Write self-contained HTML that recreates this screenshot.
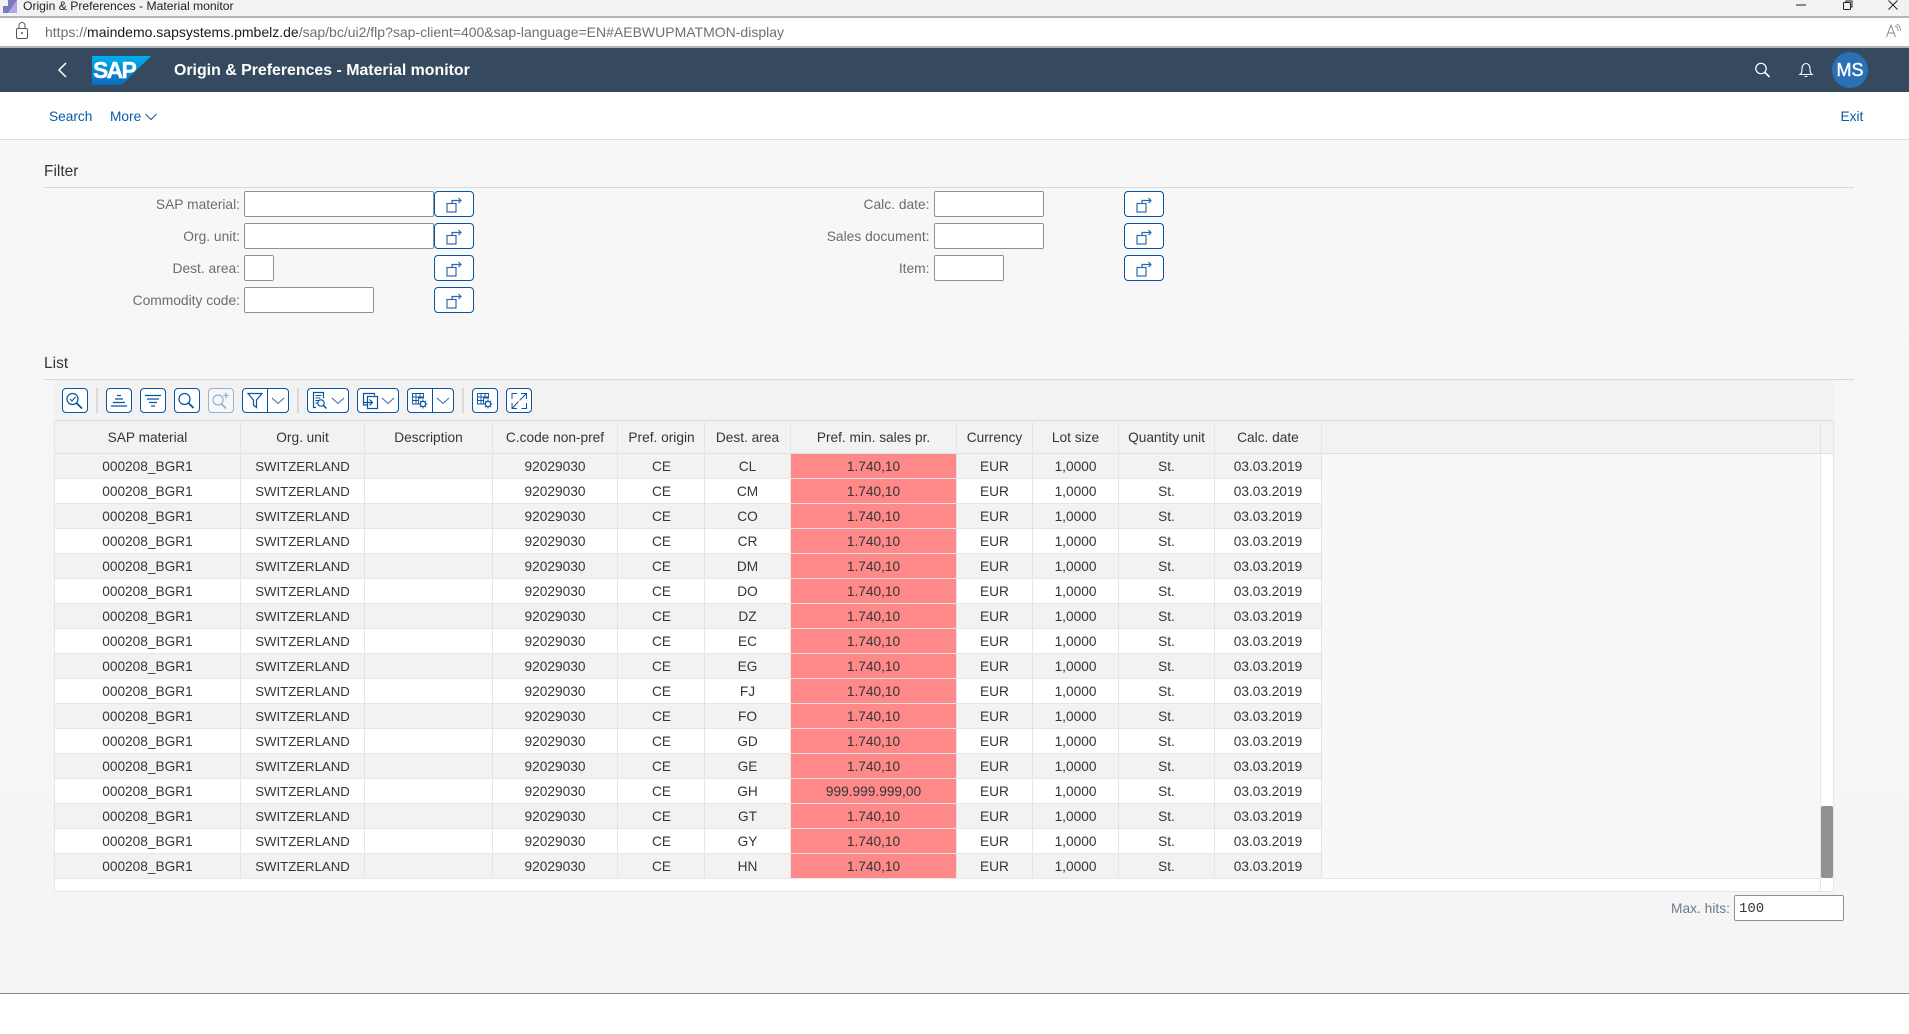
<!DOCTYPE html>
<html lang="en"><head><meta charset="utf-8"><title>Origin &amp; Preferences - Material monitor</title>
<style>
*{box-sizing:border-box}
html,body{margin:0;padding:0;width:1909px;height:1034px;overflow:hidden;background:#fff;font-family:"Liberation Sans",sans-serif;color:#32363a}
.a{position:absolute;white-space:nowrap}
svg{position:absolute;left:0;top:0;overflow:visible;fill:none}
.lbl{position:absolute;width:230px;text-align:right;font-size:13.8px;line-height:28px;color:#6a6d70;white-space:nowrap}
.inp{position:absolute;height:26px;background:#fff;border:1px solid #89919a;border-radius:2px}
.vh{position:absolute;width:40px;height:26px;background:#fff;border:1px solid #0854a0;border-radius:4px}
.vh svg{left:-1px;top:-1.5px;stroke:#2f6cab;stroke-width:1.2}
.tb{position:absolute;top:388px;height:25px;background:#fff;border:1px solid #0854a0;border-radius:4px}
.tb svg{left:-1px;top:-1.5px;stroke:#0854a0;stroke-width:1.2}
.sep{position:absolute;top:388px;width:2px;height:25px;background:#d9d9d9}
.split{position:absolute;top:0;width:1px;height:23px;background:#0854a0}
table{position:absolute;left:55px;top:420px;width:1267px;border-collapse:separate;border-spacing:0;table-layout:fixed;font-size:13.7px}
th,td{padding:0;text-align:center;border-right:1px solid #e5e5e5;border-bottom:1px solid #e5e5e5;white-space:nowrap;overflow:hidden;font-weight:normal}
th{height:34px;background:#f2f2f2;border-top:1px solid #d9d9d9;color:#32363a;border-bottom-color:#e0e0e0}
td{height:25px;background:#fff}
td:nth-child(2){font-size:13.2px}
td:nth-child(5),th:nth-child(5){padding-left:1px}
tr.z td{background:#f2f2f2}
td.r,tr.z td.r{background:#ff8888}
</style></head><body>

<!-- browser title bar -->
<div class="a" style="left:0;top:0;width:1909px;height:16px;background:#f2f2f2"></div>
<div class="a" style="left:0;top:16px;width:1909px;height:2px;background:#b5b5b5"></div>
<svg width="18" height="14" style="left:3px;top:0"><path d="M0 6h5V0h9v13H0z" fill="#7a79c4"/><path d="M5 13L14 0v13z" fill="#b9a6dc"/></svg>
<div class="a" style="left:23px;top:-1px;font-size:12.15px;line-height:14px;color:#222">Origin &amp; Preferences - Material monitor</div>
<svg width="1909" height="16"><path d="M1796 5h10" stroke="#222" stroke-width="1"/><rect x="1843.5" y="2.5" width="7" height="7" rx="1" stroke="#222"/><path d="M1846 2V1h6v6h-1" stroke="#222"/><path d="M1888.5 .5l9 9M1897.5 .5l-9 9" stroke="#222"/></svg>

<!-- address bar -->
<svg width="1909" height="48"><rect x="16.5" y="28.5" width="11" height="10" rx="1.5" stroke="#555"/><path d="M19 28v-2.500a3 3 0 0 1 6 0V28" stroke="#555"/><circle cx="22" cy="33" r="1" fill="#555"/>
<path d="M1886.500 37l4.500-12 4.500 12M1888 33h6" stroke="#888" stroke-width="1"/><path d="M1895 26a5 5 0 0 1 3 5M1896.500 24a7 7 0 0 1 4 7" stroke="#999"/></svg>
<div class="a" style="left:45px;top:24px;font-size:14px;line-height:16px;color:#6f6f6f">https://<span style="color:#1a1a1a">maindemo.sapsystems.pmbelz.de</span>/sap/bc/ui2/flp?sap-client=400&amp;sap-language=EN#AEBWUPMATMON-display</div>
<div class="a" style="left:0;top:46px;width:1909px;height:2px;background:#b5b5b5"></div>

<!-- shell header -->
<div class="a" style="left:0;top:48px;width:1909px;height:44px;background:#354a5f"></div>
<svg width="1909" height="92">
<defs><linearGradient id="g" x1="0" y1="0" x2="0" y2="1"><stop offset="0" stop-color="#00aeef"/><stop offset="1" stop-color="#0b6bbd"/></linearGradient></defs>
<path d="M66 63l-7 7 7 7" stroke="#fff" stroke-width="1.500"/>
<polygon points="92,56 151,56 122,85 92,85" fill="url(#g)"/>
<circle cx="1761" cy="68.500" r="5.200" stroke="#fff" stroke-width="1.200"/><path d="M1765 72.500l4.500 4.500" stroke="#fff" stroke-width="1.600"/>
<path d="M1800 74.500c2-1.500 2-3.500 2-6 0-3 2-5 4-5s4 2 4 5c0 2.500 0 4.500 2 6zM1804.500 76.500h3" stroke="#fff" stroke-width="1.100"/>
<circle cx="1850" cy="70" r="18" fill="#2b6fb6"/>
</svg>
<div class="a" style="left:93px;top:57px;font-size:23px;line-height:26px;font-weight:bold;color:#fff;letter-spacing:-1.700px;-webkit-text-stroke:.4px #fff">SAP</div>
<div class="a" style="left:174px;top:61px;font-size:15.9px;line-height:20px;font-weight:bold;color:#fff">Origin &amp; Preferences - Material monitor</div>
<div class="a" style="left:1832px;top:60px;width:36px;text-align:center;font-size:18px;line-height:20px;color:#fff;-webkit-text-stroke:.4px #fff">MS</div>

<!-- sub header -->
<div class="a" style="left:49px;top:108px;font-size:13.7px;line-height:17px;color:#0a5aa8">Search</div>
<div class="a" style="left:110px;top:108px;font-size:13.7px;line-height:17px;color:#0a5aa8">More</div>
<svg width="1909" height="130"><path d="M145.500 114l5.500 5.500 5.500-5.500" stroke="#0a5aa8" stroke-width="1"/></svg>
<div class="a" style="left:1840.500px;top:108px;font-size:13.7px;line-height:17px;color:#0a5aa8">Exit</div>

<!-- content background -->
<div class="a" style="left:0;top:139px;width:1909px;height:855px;background:linear-gradient(#f7f7f7,#f5f5f5);border-top:1px solid #d9d9d9;border-bottom:1px solid #8a8a8a"></div>

<!-- filter -->
<div class="a" style="left:44px;top:162px;font-size:15.500px;line-height:19px">Filter</div>
<div class="a" style="left:44px;top:187px;width:1810px;height:1px;background:#d9d9d9"></div>

<div class="lbl" style="left:10px;top:191px">SAP material:</div>
<div class="lbl" style="left:10px;top:223px">Org. unit:</div>
<div class="lbl" style="left:10px;top:255px">Dest. area:</div>
<div class="lbl" style="left:10px;top:287px">Commodity code:</div>
<div class="inp" style="left:244px;top:191px;width:190px"></div>
<div class="inp" style="left:244px;top:223px;width:190px"></div>
<div class="inp" style="left:244px;top:255px;width:30px"></div>
<div class="inp" style="left:244px;top:287px;width:130px"></div>
<div class="vh" style="left:434px;top:191px"><svg width="40" height="26"><rect x="13" y="12.500" width="9" height="8.500"/><path d="M18 12V9.500H27M24.500 7L27 9.500 24.500 12"/></svg></div>
<div class="vh" style="left:434px;top:223px"><svg width="40" height="26"><rect x="13" y="12.500" width="9" height="8.500"/><path d="M18 12V9.500H27M24.500 7L27 9.500 24.500 12"/></svg></div>
<div class="vh" style="left:434px;top:255px"><svg width="40" height="26"><rect x="13" y="12.500" width="9" height="8.500"/><path d="M18 12V9.500H27M24.500 7L27 9.500 24.500 12"/></svg></div>
<div class="vh" style="left:434px;top:287px"><svg width="40" height="26"><rect x="13" y="12.500" width="9" height="8.500"/><path d="M18 12V9.500H27M24.500 7L27 9.500 24.500 12"/></svg></div>

<div class="lbl" style="left:699.500px;top:191px">Calc. date:</div>
<div class="lbl" style="left:699.500px;top:223px">Sales document:</div>
<div class="lbl" style="left:699.500px;top:255px">Item:</div>
<div class="inp" style="left:934px;top:191px;width:110px"></div>
<div class="inp" style="left:934px;top:223px;width:110px"></div>
<div class="inp" style="left:934px;top:255px;width:70px"></div>
<div class="vh" style="left:1124px;top:191px"><svg width="40" height="26"><rect x="13" y="12.500" width="9" height="8.500"/><path d="M18 12V9.500H27M24.500 7L27 9.500 24.500 12"/></svg></div>
<div class="vh" style="left:1124px;top:223px"><svg width="40" height="26"><rect x="13" y="12.500" width="9" height="8.500"/><path d="M18 12V9.500H27M24.500 7L27 9.500 24.500 12"/></svg></div>
<div class="vh" style="left:1124px;top:255px"><svg width="40" height="26"><rect x="13" y="12.500" width="9" height="8.500"/><path d="M18 12V9.500H27M24.500 7L27 9.500 24.500 12"/></svg></div>

<!-- list -->
<div class="a" style="left:44px;top:354px;font-size:15.500px;line-height:19px">List</div>
<div class="a" style="left:44px;top:379px;width:1810px;height:1px;background:#d9d9d9"></div>
<div class="a" style="left:54px;top:380px;width:1780px;height:40px;background:#f2f2f2"></div>

<!-- toolbar -->
<div class="tb" style="left:62px;width:26px"><svg width="26" height="26"><circle cx="10.500" cy="11" r="5.500"/><path d="M8 11l2 2 3.500-4" stroke-width="1.100"/><path d="M14.500 15l5.500 5.500" stroke-width="1.800"/></svg></div>
<div class="sep" style="left:96px"></div>
<div class="tb" style="left:106px;width:26px"><svg width="26" height="26"><path d="M11 7.500h4M9 11h8M7 14.500h12M5 18h16" stroke-width="1.300"/></svg></div>
<div class="tb" style="left:140px;width:26px"><svg width="26" height="26"><path d="M5 7.500h16M7 11h12M9 14.500h8M11 18h4" stroke-width="1.300"/></svg></div>
<div class="tb" style="left:174px;width:26px"><svg width="26" height="26"><circle cx="10.500" cy="11" r="5.500"/><path d="M14.500 15l5 5" stroke-width="1.800"/></svg></div>
<div class="tb" style="left:208px;width:26px;opacity:.4"><svg width="26" height="26"><circle cx="10" cy="12" r="5"/><path d="M13.500 16l4.500 4.500" stroke-width="1.800"/><path d="M18 4.500v6M15 7.500h6"/></svg></div>
<div class="tb" style="left:242px;width:47px"><svg width="47" height="26"><path d="M6 5.500h14L14.500 12v7.500L11.500 17v-5z"/><path d="M30 10l6 5.500 6-5.500" stroke="#3f66a8" stroke-width="1"/></svg><div class="split" style="left:24px"></div></div>
<div class="sep" style="left:297px"></div>
<div class="tb" style="left:307px;width:42px"><svg width="42" height="26"><path d="M9 19.500H6.500v-15h10v6"/><path d="M8.500 7.500h6M8.500 10h5M8.500 12.500h3M8.500 15h2" stroke-width="1"/><circle cx="14" cy="15" r="3.200"/><path d="M16.500 17.500l3 3" stroke-width="1.500"/><path d="M25 10l6 5.500 6-5.500" stroke="#3f66a8" stroke-width="1"/></svg></div>
<div class="tb" style="left:357px;width:42px"><svg width="42" height="26"><path d="M10 17H6.500V5.500h11v2"/><rect x="10.500" y="8.500" width="10" height="12"/><path d="M7 14.500h8M12.500 11.500l3 3-3 3"/><path d="M25 10l6 5.500 6-5.500" stroke="#3f66a8" stroke-width="1"/></svg></div>
<div class="tb" style="left:407px;width:47px"><svg width="47" height="26"><path d="M5.500 5.500h11v4.500h-5v6h-6zM9 5.500v10.500M13 5.500v4.500M5.500 9h11M5.500 12.500h6" stroke-width=".9"/><circle cx="16" cy="16" r="2.600" stroke-width="1.300"/><path d="M16 11.500v2M16 18.500v2M11.500 16h2M18.500 16h2M12.800 12.800l1.400 1.400M17.800 17.800l1.400 1.400M19.200 12.800l-1.400 1.400M14.200 17.800l-1.400 1.400" stroke-width="1"/><path d="M30 10l6 5.500 6-5.500" stroke="#3f66a8" stroke-width="1"/></svg><div class="split" style="left:24px"></div></div>
<div class="sep" style="left:462px"></div>
<div class="tb" style="left:472px;width:26px"><svg width="26" height="26"><path d="M5.500 5.500h11v4.500h-5v6h-6zM9 5.500v10.500M13 5.500v4.500M5.500 9h11M5.500 12.500h6" stroke-width=".9"/><circle cx="16" cy="16" r="2.600" stroke-width="1.300"/><path d="M16 11.500v2M16 18.500v2M11.500 16h2M18.500 16h2M12.800 12.800l1.400 1.400M17.800 17.800l1.400 1.400M19.200 12.800l-1.400 1.400M14.200 17.800l-1.400 1.400" stroke-width="1"/></svg></div>
<div class="tb" style="left:506px;width:26px"><svg width="26" height="26"><path d="M6 11V5.500h5M20.500 15v5.500h-5" stroke-width="1"/><path d="M13.500 12.500l6.500-6.500M15 5.500h5.500V11M12.500 13.500L6.500 20M6 15v5.500h5" stroke-width="1"/></svg></div>

<!-- table -->
<div class="a" style="left:54px;top:420px;width:1780px;height:472px;background:#f8f8f8;border-left:1px solid #e5e5e5;border-right:1px solid #e5e5e5;border-bottom:1px solid #e5e5e5"></div>
<div class="a" style="left:55px;top:420px;width:1778px;height:34px;background:#f2f2f2;border-top:1px solid #d9d9d9;border-bottom:1px solid #e0e0e0"></div>
<div class="a" style="left:55px;top:879px;width:1778px;height:12px;background:#fff"></div>
<div class="a" style="left:1820px;top:420px;width:1px;height:471px;background:#e5e5e5"></div>
<div class="a" style="left:1821px;top:454px;width:12px;height:424px;background:#fff"></div>
<div class="a" style="left:1821px;top:806px;width:12px;height:72px;background:#919191;border-radius:2px"></div>
<div class="a" style="left:55px;top:878px;width:1766px;height:1px;background:#e5e5e5"></div>

<table>
<colgroup><col style="width:186px"><col style="width:124px"><col style="width:128px"><col style="width:125px"><col style="width:87px"><col style="width:86px"><col style="width:166px"><col style="width:76px"><col style="width:86px"><col style="width:96px"><col style="width:107px"></colgroup>
<tr><th>SAP material</th><th>Org. unit</th><th>Description</th><th>C.code non-pref</th><th>Pref. origin</th><th>Dest. area</th><th>Pref. min. sales pr.</th><th>Currency</th><th>Lot size</th><th>Quantity unit</th><th>Calc. date</th></tr>
<tr class="z"><td>000208_BGR1</td><td>SWITZERLAND</td><td></td><td>92029030</td><td>CE</td><td>CL</td><td class="r">1.740,10</td><td>EUR</td><td>1,0000</td><td>St.</td><td>03.03.2019</td></tr>
<tr><td>000208_BGR1</td><td>SWITZERLAND</td><td></td><td>92029030</td><td>CE</td><td>CM</td><td class="r">1.740,10</td><td>EUR</td><td>1,0000</td><td>St.</td><td>03.03.2019</td></tr>
<tr class="z"><td>000208_BGR1</td><td>SWITZERLAND</td><td></td><td>92029030</td><td>CE</td><td>CO</td><td class="r">1.740,10</td><td>EUR</td><td>1,0000</td><td>St.</td><td>03.03.2019</td></tr>
<tr><td>000208_BGR1</td><td>SWITZERLAND</td><td></td><td>92029030</td><td>CE</td><td>CR</td><td class="r">1.740,10</td><td>EUR</td><td>1,0000</td><td>St.</td><td>03.03.2019</td></tr>
<tr class="z"><td>000208_BGR1</td><td>SWITZERLAND</td><td></td><td>92029030</td><td>CE</td><td>DM</td><td class="r">1.740,10</td><td>EUR</td><td>1,0000</td><td>St.</td><td>03.03.2019</td></tr>
<tr><td>000208_BGR1</td><td>SWITZERLAND</td><td></td><td>92029030</td><td>CE</td><td>DO</td><td class="r">1.740,10</td><td>EUR</td><td>1,0000</td><td>St.</td><td>03.03.2019</td></tr>
<tr class="z"><td>000208_BGR1</td><td>SWITZERLAND</td><td></td><td>92029030</td><td>CE</td><td>DZ</td><td class="r">1.740,10</td><td>EUR</td><td>1,0000</td><td>St.</td><td>03.03.2019</td></tr>
<tr><td>000208_BGR1</td><td>SWITZERLAND</td><td></td><td>92029030</td><td>CE</td><td>EC</td><td class="r">1.740,10</td><td>EUR</td><td>1,0000</td><td>St.</td><td>03.03.2019</td></tr>
<tr class="z"><td>000208_BGR1</td><td>SWITZERLAND</td><td></td><td>92029030</td><td>CE</td><td>EG</td><td class="r">1.740,10</td><td>EUR</td><td>1,0000</td><td>St.</td><td>03.03.2019</td></tr>
<tr><td>000208_BGR1</td><td>SWITZERLAND</td><td></td><td>92029030</td><td>CE</td><td>FJ</td><td class="r">1.740,10</td><td>EUR</td><td>1,0000</td><td>St.</td><td>03.03.2019</td></tr>
<tr class="z"><td>000208_BGR1</td><td>SWITZERLAND</td><td></td><td>92029030</td><td>CE</td><td>FO</td><td class="r">1.740,10</td><td>EUR</td><td>1,0000</td><td>St.</td><td>03.03.2019</td></tr>
<tr><td>000208_BGR1</td><td>SWITZERLAND</td><td></td><td>92029030</td><td>CE</td><td>GD</td><td class="r">1.740,10</td><td>EUR</td><td>1,0000</td><td>St.</td><td>03.03.2019</td></tr>
<tr class="z"><td>000208_BGR1</td><td>SWITZERLAND</td><td></td><td>92029030</td><td>CE</td><td>GE</td><td class="r">1.740,10</td><td>EUR</td><td>1,0000</td><td>St.</td><td>03.03.2019</td></tr>
<tr><td>000208_BGR1</td><td>SWITZERLAND</td><td></td><td>92029030</td><td>CE</td><td>GH</td><td class="r">999.999.999,00</td><td>EUR</td><td>1,0000</td><td>St.</td><td>03.03.2019</td></tr>
<tr class="z"><td>000208_BGR1</td><td>SWITZERLAND</td><td></td><td>92029030</td><td>CE</td><td>GT</td><td class="r">1.740,10</td><td>EUR</td><td>1,0000</td><td>St.</td><td>03.03.2019</td></tr>
<tr><td>000208_BGR1</td><td>SWITZERLAND</td><td></td><td>92029030</td><td>CE</td><td>GY</td><td class="r">1.740,10</td><td>EUR</td><td>1,0000</td><td>St.</td><td>03.03.2019</td></tr>
<tr class="z"><td>000208_BGR1</td><td>SWITZERLAND</td><td></td><td>92029030</td><td>CE</td><td>HN</td><td class="r">1.740,10</td><td>EUR</td><td>1,0000</td><td>St.</td><td>03.03.2019</td></tr>
</table>

<!-- max hits -->
<div class="lbl" style="left:1500px;top:895px;color:#6a7a8c">Max. hits:</div>
<div class="inp" style="left:1734px;top:895px;width:110px"></div>
<div class="a" style="left:1739px;top:901px;font-family:'Liberation Mono',monospace;font-size:14px;line-height:16px">100</div>

</body></html>
